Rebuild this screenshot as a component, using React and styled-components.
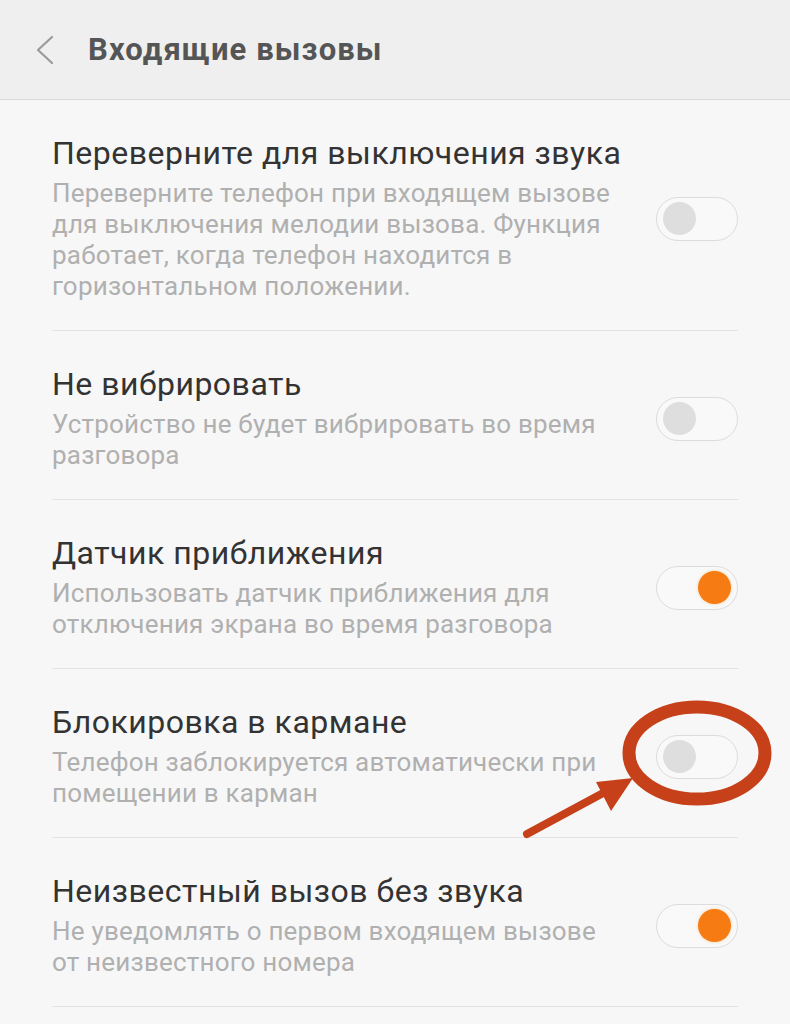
import React from "react";
import styled, { createGlobalStyle } from "styled-components";

const GlobalStyle = createGlobalStyle`
  html, body {
    margin: 0;
    padding: 0;
    background: #f7f7f7;
  }
  body {
    font-family: Roboto, "Noto Sans", "Liberation Sans", sans-serif;
    -webkit-font-smoothing: antialiased;
  }
`;

const Page = styled.div`
  position: relative;
  width: 790px;
  min-height: 1024px;
  background: #f7f7f7;
  overflow: hidden;
`;

const Header = styled.header`
  display: flex;
  align-items: center;
  height: 99px;
  background: #efefef;
  border-bottom: 1px solid #dadada;
  padding-left: 36px;
  box-sizing: content-box;
`;

const BackIcon = styled.svg`
  width: 20px;
  height: 30px;
  fill: none;
  stroke: #9a9a9a;
  stroke-width: 2.2px;
  stroke-linecap: round;
  stroke-linejoin: round;
`;

const Title = styled.h1`
  margin: 0 0 0 32px;
  font-size: 31px;
  font-weight: 700;
  color: #555555;
  letter-spacing: 1.1px;
`;

const List = styled.div`
  padding: 0 52px;
`;

const Row = styled.div`
  display: flex;
  align-items: center;
  gap: 37px;
  padding: 35px 0 28px;
  border-bottom: 1.5px solid #e3e3e3;
`;

const Texts = styled.div`
  flex: 1;
  min-width: 0;
`;

const RowTitle = styled.div`
  font-size: 32px;
  line-height: 36px;
  letter-spacing: 0.5px;
  color: #333333;
  margin-bottom: 7px;
  white-space: nowrap;
`;

const RowDesc = styled.div`
  font-size: 26px;
  line-height: 31px;
  letter-spacing: 0.2px;
  color: #b0b0b0;
`;

const Track = styled.div`
  flex: none;
  width: 82px;
  height: 44px;
  box-sizing: border-box;
  border-radius: 22px;
  border: 1.5px solid #dcdcdc;
  background: #f9f9f9;
  display: flex;
  align-items: center;
  justify-content: ${(p) => (p.on ? "flex-end" : "flex-start")};
  padding: 0 6px;
`;

const Knob = styled.div`
  width: 33px;
  height: 33px;
  border-radius: 50%;
  background: ${(p) => (p.on ? "#f57b12" : "#dedede")};
  box-shadow: ${(p) => (p.on ? "0 0 3px rgba(245, 160, 60, 0.5)" : "none")};
`;

const Annotation = styled.svg`
  position: absolute;
  left: 0;
  top: 0;
  width: 790px;
  height: 1024px;
  pointer-events: none;
`;

const Toggle = ({ on }) => (
  <Track on={on}>
    <Knob on={on} />
  </Track>
);

const items = [
  {
    title: "Переверните для выключения звука",
    desc: "Переверните телефон при входящем вызове для выключения мелодии вызова. Функция работает, когда телефон находится в горизонтальном положении.",
    on: false,
  },
  {
    title: "Не вибрировать",
    desc: "Устройство не будет вибрировать во время разговора",
    on: false,
  },
  {
    title: "Датчик приближения",
    desc: "Использовать датчик приближения для отключения экрана во время разговора",
    on: true,
  },
  {
    title: "Блокировка в кармане",
    desc: "Телефон заблокируется автоматически при помещении в карман",
    on: false,
  },
  {
    title: "Неизвестный вызов без звука",
    desc: "Не уведомлять о первом входящем вызове от неизвестного номера",
    on: true,
  },
];

export default function App() {
  return (
    <Page>
      <GlobalStyle />
      <Header>
        <BackIcon viewBox="0 0 20 30">
          <polyline points="16 2 2 15 16 28" />
        </BackIcon>
        <Title>Входящие вызовы</Title>
      </Header>
      <List>
        {items.map((it) => (
          <Row key={it.title}>
            <Texts>
              <RowTitle>{it.title}</RowTitle>
              <RowDesc>{it.desc}</RowDesc>
            </Texts>
            <Toggle on={it.on} />
          </Row>
        ))}
      </List>
      <Annotation viewBox="0 0 790 1024">
        <ellipse
          cx="697"
          cy="753"
          rx="68"
          ry="46"
          fill="none"
          stroke="#c6401a"
          strokeWidth="13"
        />
        <line
          x1="527"
          y1="834"
          x2="605"
          y2="792"
          stroke="#c6401a"
          strokeWidth="8"
          strokeLinecap="round"
        />
        <polygon points="596,782 633,778 611,811" fill="#c6401a" />
      </Annotation>
    </Page>
  );
}
